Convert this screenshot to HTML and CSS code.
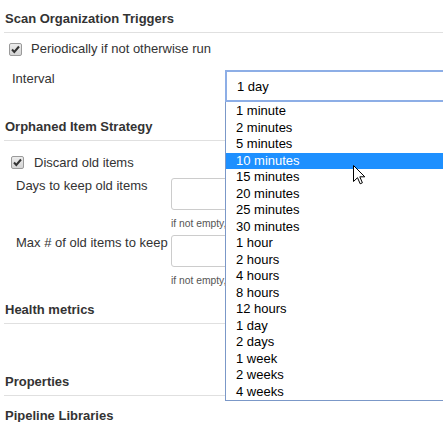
FILE: index.html
```html
<!DOCTYPE html>
<html>
<head>
<meta charset="utf-8">
<link rel="stylesheet" href="styles.css">
</head>
<body>
<div class="page">
  <section class="section">
    <h2 class="section-title">Scan Organization Triggers</h2>
    <label class="check-row check-row-first"><span class="cb"><svg viewBox="0 0 13 13" width="13" height="13"><path d="M3 6.5 L5.3 9 L10 3.5" fill="none" stroke="#333" stroke-width="2"/></svg></span>Periodically if not otherwise run</label>
    <div class="field-row interval-row">
      <span class="field-label interval-label">Interval</span>
      <div class="select">
        <span class="select-value">1 day</span>
        <ul class="dropdown">
          <li class="option">1 minute</li>
          <li class="option">2 minutes</li>
          <li class="option">5 minutes</li>
          <li class="option option-active">10 minutes</li>
          <li class="option">15 minutes</li>
          <li class="option">20 minutes</li>
          <li class="option">25 minutes</li>
          <li class="option">30 minutes</li>
          <li class="option">1 hour</li>
          <li class="option">2 hours</li>
          <li class="option">4 hours</li>
          <li class="option">8 hours</li>
          <li class="option">12 hours</li>
          <li class="option">1 day</li>
          <li class="option">2 days</li>
          <li class="option">1 week</li>
          <li class="option">2 weeks</li>
          <li class="option">4 weeks</li>
        </ul>
      </div>
    </div>
  </section>

  <section class="section section-orphaned">
    <h2 class="section-title">Orphaned Item Strategy</h2>
    <label class="check-row check-row-second"><span class="cb"><svg viewBox="0 0 13 13" width="13" height="13"><path d="M3 6.5 L5.3 9 L10 3.5" fill="none" stroke="#333" stroke-width="2"/></svg></span>Discard old items</label>
    <div class="field-row days-row">
      <span class="field-label">Days to keep old items</span>
      <div class="text-input"></div>
    </div>
    <div class="hint hint-days">if not empty,</div>
    <div class="field-row max-row">
      <span class="field-label">Max # of old items to keep</span>
      <div class="text-input"></div>
    </div>
    <div class="hint hint-max">if not empty,</div>
  </section>

  <section class="section section-health">
    <h2 class="section-title">Health metrics</h2>
    <div class="empty-body"></div>
  </section>

  <section class="section section-properties">
    <h2 class="section-title">Properties</h2>
  </section>

  <section class="section section-libraries">
    <h2 class="section-title">Pipeline Libraries</h2>
  </section>
</div>

<svg class="cursor" width="13" height="20" viewBox="0 0 13 20">
  <path d="M0.5 0.5 L0.5 16.5 L4.5 12.7 L7.2 18.8 L9.4 17.8 L6.8 11.8 L11.8 11.8 Z" fill="#fff" stroke="#000" stroke-width="1" stroke-linejoin="miter"/>
</svg>
</body>
</html>
```

FILE: styles.css
```css
html, body {
  margin: 0;
  padding: 0;
}

body {
  width: 443px;
  height: 422px;
  overflow: hidden;
  position: relative;
  background: #fff;
  font-family: "Liberation Sans", Arial, sans-serif;
  font-size: 13px;
  color: #333;
}

.page {
  padding-left: 4px;
}

.section-title {
  margin: 0;
  padding: 11px 0 5px 1px;
  font-size: 13px;
  font-weight: bold;
  line-height: 16px;
  border-bottom: 1px solid #e0e0e0;
}

.check-row {
  display: flex;
  align-items: center;
  height: 16px;
  line-height: 16px;
}

.check-row-first {
  margin-top: 8px;
  padding-left: 5px;
  gap: 9px;
}

.check-row-second {
  margin-top: 13.5px;
  padding-left: 7px;
  gap: 10px;
}

.cb {
  display: inline-flex;
  flex: 0 0 13px;
  width: 13px;
  height: 13px;
  box-sizing: border-box;
  border: 1px solid #9a9a9a;
  border-radius: 2px;
  background: linear-gradient(#ececec, #d4d4d4);
  overflow: hidden;
}

.cb svg {
  margin: -1px;
}

.field-row {
  display: flex;
  align-items: flex-start;
}

.field-label {
  width: 167px;
  flex: 0 0 167px;
  box-sizing: border-box;
  padding-left: 12px;
  line-height: 16px;
}

.interval-row {
  margin-top: 13px;
}

.interval-label {
  width: 221px;
  flex: 0 0 221px;
  padding-left: 8px;
  padding-top: 1px;
}

.select {
  position: relative;
  flex: 0 0 240px;
  width: 240px;
  height: 32px;
  box-sizing: border-box;
  border: 2px solid #8daee6;
  padding-left: 10px;
  display: flex;
  align-items: center;
  color: #000;
}

.dropdown {
  position: absolute;
  top: calc(100% + 2px);
  left: -2px;
  width: 240px;
  margin: 0;
  padding: 1px 0 0;
  list-style: none;
  background: #fff;
  border: 1px solid #7b98c8;
  border-top: none;
  z-index: 2;
}

.option {
  height: 16.53px;
  line-height: 16.53px;
  padding-left: 10px;
  color: #000;
  white-space: nowrap;
}

.option-active {
  background: #1e90ff;
  color: #fff;
}

.section-orphaned {
  margin-top: 6px;
}

.days-row {
  margin-top: 7.5px;
}

.max-row {
  margin-top: 5.5px;
}

.text-input {
  flex: 0 0 300px;
  width: 300px;
  height: 32px;
  box-sizing: border-box;
  border: 1px solid #ccc;
  border-radius: 3px;
  background: #fff;
}

.hint {
  padding-left: 167px;
  font-size: 10.3px;
  line-height: 12px;
  color: #555;
  white-space: nowrap;
}

.hint-days {
  margin-top: 7.5px;
}

.hint-max {
  margin-top: 8px;
}

.section-health {
  margin-top: 4px;
}

.empty-body {
  height: 39px;
}

.section-libraries {
  margin-top: 1px;
}

.cursor {
  position: absolute;
  left: 353px;
  top: 165px;
  z-index: 5;
}
```
